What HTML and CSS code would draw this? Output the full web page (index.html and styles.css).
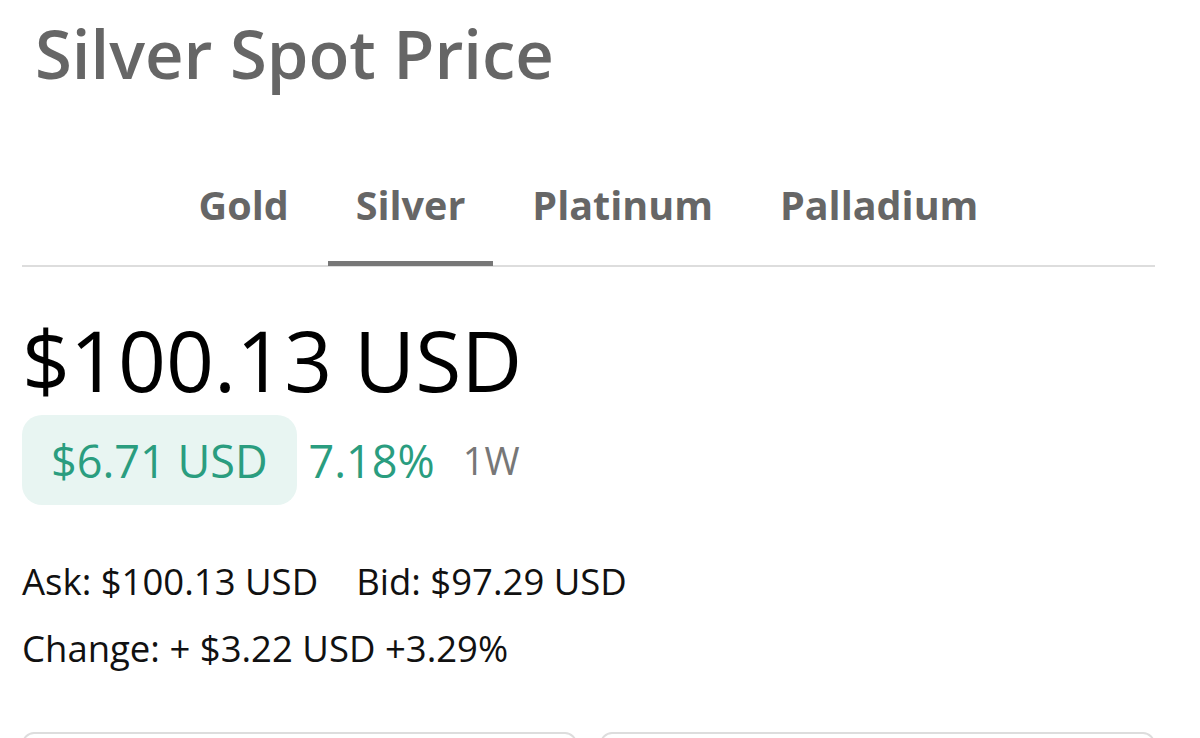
FILE: index.html
```html
<!DOCTYPE html>
<html>
<head>
<meta charset="utf-8">
<link rel="stylesheet" href="styles.css">
</head>
<body>
<div class="page">
  <h1 class="title">Silver Spot Price</h1>
  <nav class="tabs">
    <div class="tab">Gold</div>
    <div class="tab active">Silver</div>
    <div class="tab">Platinum</div>
    <div class="tab">Palladium</div>
  </nav>
  <div class="price">$100.13 USD</div>
  <div class="change-row">
    <div class="badge">$6.71 USD</div>
    <div class="pct">7.18%</div>
    <div class="period">1W</div>
  </div>
  <div class="info">
    <div class="line"><span class="ask">Ask: $100.13 USD</span><span>Bid: $97.29 USD</span></div>
    <div class="line">Change: + $3.22 USD +3.29%</div>
  </div>
  <div class="cards">
    <div class="card"></div>
    <div class="card"></div>
  </div>
</div>
</body>
</html>
```
FILE: styles.css
```css
html, body {
  margin: 0;
  padding: 0;
  background: #fff;
}
body {
  font-family: "Open Sans", "Noto Sans", sans-serif;
  overflow: hidden;
  height: 738px;
}
.page {
  padding: 0 45px 0 22px;
  height: 738px;
  overflow: hidden;
  box-sizing: border-box;
}
.title {
  margin: 0;
  padding: 10px 0 0 13px;
  font-size: 67px;
  font-weight: 600;
  color: #666;
  line-height: 86px;
}
.tabs {
  margin-top: 84px;
  display: flex;
  justify-content: center;
  gap: 11px;
  border-bottom: 2px solid #ddd;
}
.tab {
  font-size: 39.5px;
  font-weight: 700;
  color: #666;
  padding: 0 28px;
  line-height: 50px;
  padding-bottom: 31px;
  border-bottom: 5px solid transparent;
  margin-bottom: -1px;
}
.tab.active {
  border-bottom-color: #777;
}
.price {
  font-size: 84px;
  color: #000;
  line-height: 100px;
  margin-top: 43px;
}
.change-row {
  display: flex;
  align-items: center;
  margin-top: 5px;
}
.badge {
  background: #e8f5f2;
  border-radius: 20px;
  height: 90px;
  padding: 0 29px;
  display: flex;
  align-items: center;
  font-size: 45px;
  color: #2a9d7f;
}
.pct {
  font-size: 45px;
  color: #2a9d7f;
  margin-left: 12px;
}
.period {
  font-size: 38px;
  color: #777;
  margin-left: 28px;
}
.info {
  margin-top: 43px;
  font-size: 36.5px;
  color: #111;
}
.line {
  line-height: 67px;
}
.ask {
  margin-right: 38px;
}
.cards {
  display: flex;
  gap: 23px;
  margin-top: 50px;
}
.card {
  flex: 1;
  height: 60px;
  border: 2px solid #ddd;
  border-radius: 12px;
}
```
